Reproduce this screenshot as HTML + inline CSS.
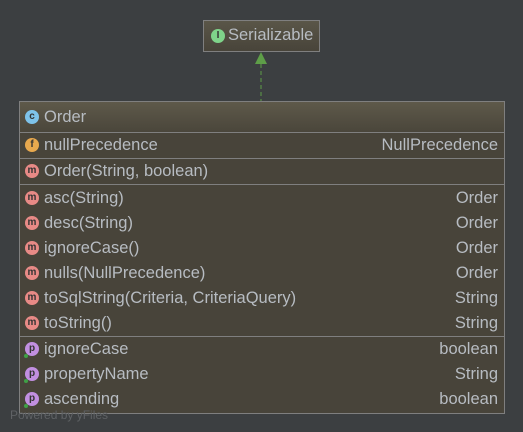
<!DOCTYPE html>
<html><head><style>
body{margin:0;width:523px;height:432px;background:#3c3f41;position:relative;overflow:hidden;font-family:"Liberation Sans","DejaVu Sans",sans-serif;font-size:16.5px;color:#b7bcc2}
.ser{position:absolute;left:203px;top:20px;width:115px;height:30px;border:1px solid #7f7f7f;background:linear-gradient(#5a5648,#48443a);}
.box{position:absolute;left:19px;top:101px;width:484px;height:311px;border:1px solid #7f7f7f;background:#48443a}
.hd{position:absolute;left:0;top:0;width:484px;height:30px;background:linear-gradient(#5e594a,#4a463b);border-bottom:1px solid #7f7f7f}
.row{position:absolute;left:0;width:484px;height:25px;line-height:25px}
.row .n{position:absolute;left:24px}
.row .t{position:absolute;right:6px}
.ic{position:absolute;left:5px;top:5px;width:14px;height:14px;border-radius:50%;font-size:10px;line-height:14px;text-align:center;color:#333;font-weight:bold}
.sep{position:absolute;left:0;width:484px;height:1px;background:#7f7f7f}
.m{background:#e88a86}.f{background:#e8a94e}.p{background:#c18fe0}.c{background:#7ec3ea}
.dot{position:absolute;left:4px;top:17px;width:4px;height:4px;border-radius:50%;background:#3fa046}
</style></head><body>
<div class="ser"><div class="ic" style="background:#7fd48a;left:7px;top:8px">I</div><span style="position:absolute;left:24px;top:5px;color:#b7bcc2">Serializable</span></div>
<svg style="position:absolute;left:254px;top:51px" width="14" height="50"><polygon points="7,1 1,13 13,13" fill="#5e9e48"/><line x1="7" y1="13" x2="7" y2="50" stroke="#5e9e48" stroke-dasharray="4,3"/></svg>
<div class="box">
<div class="hd"><div class="row" style="top:3px"><div class="ic c">c</div><span class="n">Order</span></div></div>
<div class="row" style="top:31px"><div class="ic f">f</div><span class="n">nullPrecedence</span><span class="t">NullPrecedence</span></div>
<div class="sep" style="top:56px"></div>
<div class="row" style="top:57px"><div class="ic m">m</div><span class="n">Order(String, boolean)</span></div>
<div class="sep" style="top:82px"></div>
<div class="row" style="top:84px"><div class="ic m">m</div><span class="n">asc(String)</span><span class="t">Order</span></div>
<div class="row" style="top:109px"><div class="ic m">m</div><span class="n">desc(String)</span><span class="t">Order</span></div>
<div class="row" style="top:134px"><div class="ic m">m</div><span class="n">ignoreCase()</span><span class="t">Order</span></div>
<div class="row" style="top:159px"><div class="ic m">m</div><span class="n">nulls(NullPrecedence)</span><span class="t">Order</span></div>
<div class="row" style="top:184px"><div class="ic m">m</div><span class="n">toSqlString(Criteria, CriteriaQuery)</span><span class="t">String</span></div>
<div class="row" style="top:209px"><div class="ic m">m</div><span class="n">toString()</span><span class="t">String</span></div>
<div class="sep" style="top:234px"></div>
<div class="row" style="top:235px"><div class="ic p">p</div><div class="dot"></div><span class="n">ignoreCase</span><span class="t">boolean</span></div>
<div class="row" style="top:260px"><div class="ic p">p</div><div class="dot"></div><span class="n">propertyName</span><span class="t">String</span></div>
<div class="row" style="top:285px"><div class="ic p">p</div><div class="dot"></div><span class="n">ascending</span><span class="t">boolean</span></div>
</div>
<div style="position:absolute;left:10px;top:408px;font-size:12px;color:#5f6265">Powered by yFiles</div>
</body></html>
